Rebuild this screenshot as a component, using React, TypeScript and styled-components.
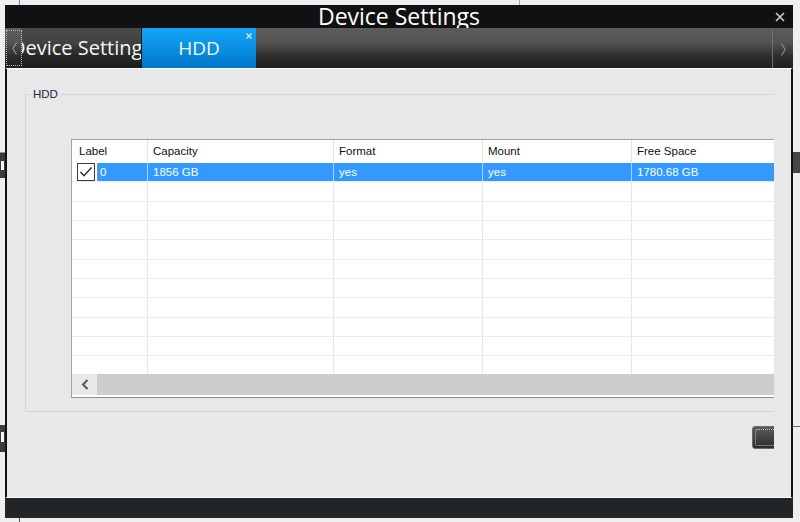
import React from "react";
import styled, { createGlobalStyle } from "styled-components";

const Global = createGlobalStyle`
  html, body { margin: 0; padding: 0; }
  body { width: 800px; height: 522px; overflow: hidden; background: #efefef; }
  * { box-sizing: border-box; }
`;

const Desktop = styled.div`
  width: 800px;
  height: 522px;
  padding: 5px 7px 4px 5px;
  background-color: #efefef;
  background-repeat: no-repeat;
  background-image:
    linear-gradient(#4a90d9, #4a90d9),
    linear-gradient(#a8a8a8, #a8a8a8),
    linear-gradient(#f4f4f4, #f4f4f4),
    linear-gradient(#5aa0e0, #5aa0e0),
    linear-gradient(#3b3b3b, #3b3b3b),
    linear-gradient(#f4f4f4, #f4f4f4),
    linear-gradient(#3b3b3b, #3b3b3b),
    linear-gradient(#474747, #474747),
    linear-gradient(#666, #666),
    linear-gradient(#555, #555);
  background-position:
    19px 0, 519px 0, 1px 161px, 0 152px, 0 153px, 1px 432px, 0 425px,
    793px 152px, 793px 426px, 19px 518px;
  background-size:
    1px 5px, 1px 5px, 3px 9px, 5px 1px, 5px 25px, 3px 10px, 5px 27px,
    7px 21px, 7px 1px, 1px 4px;
`;

const Dialog = styled.div`
  width: 788px;
  height: 513px;
  display: flex;
  flex-direction: column;
  overflow: hidden;
`;

const TitleBar = styled.div`
  height: 23px;
  flex-shrink: 0;
  background: #111113;
  display: grid;
  grid-template-columns: 1fr auto 1fr;
  align-items: center;
`;

const Title = styled.div`
  grid-column: 2;
  font-family: "Open Sans", "Noto Sans", sans-serif;
  font-size: 23px;
  line-height: 23px;
  color: #ffffff;
  white-space: nowrap;
`;

const CloseButton = styled.div`
  grid-column: 3;
  justify-self: end;
  margin-right: 8px;
  width: 10px;
  height: 10px;
  display: flex;
`;

const TabBar = styled.div`
  height: 40px;
  flex-shrink: 0;
  display: flex;
  background: linear-gradient(#5c5c5c 0%, #545454 35%, #2e2e2e 70%, #1f1f1f 100%);
`;

const ScrollLeft = styled.div`
  width: 17px;
  flex-shrink: 0;
  padding: 2px 0 2px 1px;
  display: flex;
`;

const FocusRect = styled.div`
  flex: 1;
  border: 1px dotted #b5b5b5;
  display: flex;
  align-items: center;
  justify-content: center;
`;

const Tab = styled.div<{ $active?: boolean; $width: number }>`
  position: relative;
  width: ${(p) => p.$width}px;
  flex-shrink: 0;
  overflow: hidden;
  white-space: nowrap;
  font-family: "Open Sans", "Noto Sans", sans-serif;
  font-size: 19px;
  line-height: 40px;
  color: #f6f6f6;
  display: flex;
  justify-content: ${(p) => (p.$active ? "center" : "flex-start")};
  background: ${(p) =>
    p.$active
      ? "linear-gradient(#12a4f4 0%, #0b92e6 45%, #0077c8 100%)"
      : "linear-gradient(#4a4a4a 0%, #434343 35%, #262626 70%, #1c1c1c 100%)"};
  border-right: ${(p) => (p.$active ? "none" : "1px solid #151515")};
`;

const ClippedLabel = styled.span`
  font-size: 20px;
  margin-left: -11px;
`;

const TabClose = styled.div`
  position: absolute;
  top: 5px;
  right: 4px;
  width: 6px;
  height: 6px;
  display: flex;
`;

const TabSpacer = styled.div`
  flex: 1;
`;

const ScrollRight = styled.div`
  width: 21px;
  flex-shrink: 0;
  border-left: 1px solid #6e6e6e;
  margin: 2px 0 0;
  display: flex;
  align-items: center;
  justify-content: center;
`;

const Content = styled.div`
  flex: 1;
  display: flex;
  background: #e8e8e8;
  border-left: 2px solid #121212;
  border-right: 2px solid #121212;
  border-top: 1px solid #fafafa;
  border-bottom: 1px solid #ffffff;
  min-height: 0;
`;

const Viewport = styled.div`
  width: 767px;
  flex-shrink: 0;
  overflow: hidden;
  padding: 19px 0 0 18px;
  display: flex;
  flex-direction: column;
  align-items: flex-start;
`;

const Gutter = styled.div`
  flex: 1;
`;

const GroupBox = styled.fieldset`
  margin: 0;
  padding: 0;
  width: 800px;
  height: 324px;
  flex-shrink: 0;
  min-width: 0;
  border: 1px solid #d6d6d6;
`;

const Legend = styled.legend`
  margin-left: 4px;
  padding: 0 3px;
  font-family: "Liberation Sans", Arial, sans-serif;
  font-size: 11.5px;
  line-height: 13px;
  color: #2a2440;
`;

const Grid = styled.div`
  margin: 38px 0 0 45px;
  width: 711px;
  height: 259px;
  background: #ffffff;
  border-top: 1px solid #a3a3a3;
  border-left: 1px solid #a3a3a3;
  border-bottom: 1px solid #8c8c8c;
  display: flex;
  flex-direction: column;
  font-family: "Liberation Sans", Arial, sans-serif;
  font-size: 11.5px;
`;

const cols = "76px 186px 149px 149px 150px";

const HeaderRow = styled.div`
  height: 23px;
  flex-shrink: 0;
  display: grid;
  grid-template-columns: ${cols};
`;

const HeaderCell = styled.div<{ $first?: boolean }>`
  border-right: 1px solid #e4e4e4;
  padding-left: ${(p) => (p.$first ? 7 : 5)}px;
  line-height: 23px;
  color: #111;
  white-space: nowrap;
`;

const Body = styled.div`
  height: 211px;
  flex-shrink: 0;
  overflow: hidden;
`;

const Row = styled.div`
  height: 19.33px;
  display: grid;
  grid-template-columns: ${cols};
  border-bottom: 1px solid #ececec;
`;

const Cell = styled.div<{ $selected?: boolean }>`
  border-right: 1px solid ${(p) => (p.$selected ? "#a9d3ff" : "#e6e6e6")};
  background: ${(p) => (p.$selected ? "#3399ff" : "transparent")};
  color: #ffffff;
  padding-left: 5px;
  line-height: 18px;
  white-space: nowrap;
`;

const LabelCell = styled.div`
  border-right: 1px solid #a9d3ff;
  display: flex;
  align-items: stretch;
  padding-left: 5px;
`;

const CheckBox = styled.div`
  width: 18px;
  height: 18px;
  flex-shrink: 0;
  border: 1px solid #3a3a3a;
  background: #ffffff;
  display: flex;
  align-items: center;
  justify-content: center;
`;

const SelectedLabel = styled.div`
  flex: 1;
  margin-left: 2px;
  background: #3399ff;
  border-left: 1px dotted #e0893a;
  color: #ffffff;
  padding-left: 2px;
  line-height: 18px;
`;

const HScroll = styled.div`
  height: 22px;
  flex-shrink: 0;
  display: flex;
  background: #cdcdcd;
  border-bottom: 1px solid #ffffff;
`;

const ArrowButton = styled.div`
  width: 25px;
  background: #e9e9e9;
  display: flex;
  align-items: center;
  justify-content: center;
`;

const DarkButton = styled.div`
  margin: 14px 0 0 727px;
  width: 50px;
  height: 23px;
  flex-shrink: 0;
  border-radius: 3px;
  border: 1px solid #6a6a6a;
  background: linear-gradient(#5c5c5c, #2c2c2c);
  padding: 2px;
  display: flex;
`;

const ButtonFocus = styled.div`
  flex: 1;
  border: 1px dotted #bdbdbd;
  border-radius: 2px;
`;

const Footer = styled.div`
  height: 20px;
  flex-shrink: 0;
  background: #212528;
`;

const columns = ["Label", "Capacity", "Format", "Mount", "Free Space"];

export default function App() {
  const emptyRows = Array.from({ length: 10 });
  return (
    <>
      <Global />
      <Desktop>
        <Dialog>
          <TitleBar>
            <Title>Device Settings</Title>
            <CloseButton>
              <svg width="10" height="10" viewBox="0 0 10 10">
                <path d="M1 1L9 9M9 1L1 9" stroke="#c9c9c9" strokeWidth="1.7" />
              </svg>
            </CloseButton>
          </TitleBar>
          <TabBar>
            <ScrollLeft>
              <FocusRect>
                <svg width="5" height="13" viewBox="0 0 5 13">
                  <path d="M4.5 0.5L0.8 6.5L4.5 12.5" stroke="#a8a8a8" strokeWidth="1" fill="none" />
                </svg>
              </FocusRect>
            </ScrollLeft>
            <Tab $width={120}>
              <ClippedLabel>Device Settings</ClippedLabel>
            </Tab>
            <Tab $active $width={114}>
              HDD
              <TabClose>
                <svg width="6" height="6" viewBox="0 0 6 6">
                  <path d="M0.5 0.5L5.5 5.5M5.5 0.5L0.5 5.5" stroke="#f3e4e4" strokeWidth="1.2" />
                </svg>
              </TabClose>
            </Tab>
            <TabSpacer />
            <ScrollRight>
              <svg width="5" height="13" viewBox="0 0 5 13">
                <path d="M0.5 0.5L4.2 6.5L0.5 12.5" stroke="#9c9c9c" strokeWidth="1" fill="none" />
              </svg>
            </ScrollRight>
          </TabBar>
          <Content>
            <Viewport>
              <GroupBox>
                <Legend>HDD</Legend>
                <Grid>
                  <HeaderRow>
                    {columns.map((c, i) => (
                      <HeaderCell key={c} $first={i === 0}>
                        {c}
                      </HeaderCell>
                    ))}
                  </HeaderRow>
                  <Body>
                    <Row>
                      <LabelCell>
                        <CheckBox>
                          <svg width="14" height="12" viewBox="0 0 14 12">
                            <path d="M1.5 6L5 9.8L12.5 1.5" stroke="#2a2a2a" strokeWidth="1.4" fill="none" />
                          </svg>
                        </CheckBox>
                        <SelectedLabel>0</SelectedLabel>
                      </LabelCell>
                      <Cell $selected>1856 GB</Cell>
                      <Cell $selected>yes</Cell>
                      <Cell $selected>yes</Cell>
                      <Cell $selected>1780.68 GB</Cell>
                    </Row>
                    {emptyRows.map((_, r) => (
                      <Row key={r}>
                        {columns.map((c) => (
                          <Cell key={c} />
                        ))}
                      </Row>
                    ))}
                  </Body>
                  <HScroll>
                    <ArrowButton>
                      <svg width="8" height="11" viewBox="0 0 8 11">
                        <path d="M6.5 1L2 5.5L6.5 10" stroke="#555" strokeWidth="2" fill="none" />
                      </svg>
                    </ArrowButton>
                  </HScroll>
                </Grid>
              </GroupBox>
              <DarkButton>
                <ButtonFocus />
              </DarkButton>
            </Viewport>
            <Gutter />
          </Content>
          <Footer />
        </Dialog>
      </Desktop>
    </>
  );
}
